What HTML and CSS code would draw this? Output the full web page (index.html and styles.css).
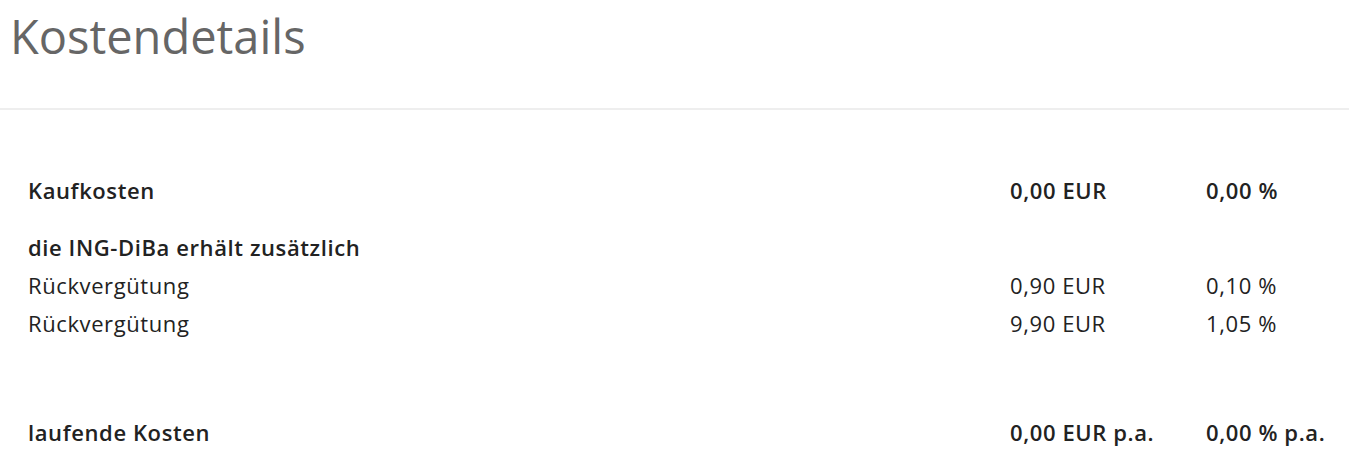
FILE: index.html
```html
<!DOCTYPE html>
<html lang="de">
<head>
  <meta charset="UTF-8">
  <meta name="viewport" content="width=device-width, initial-scale=1.0">
  <title>Kostendetails</title>
  <link rel="stylesheet" href="styles.css">
</head>
<body>
  <header class="kopf">
    <h1>Kostendetails</h1>
  </header>

  <main class="kosten">
    <div class="zeile fett abschnitt">
      <span>Kaufkosten</span>
      <span>0,00 EUR</span>
      <span>0,00 %</span>
    </div>

    <div class="zeile fett untertitel">
      <span>die ING-DiBa erhält zusätzlich</span>
      <span></span>
      <span></span>
    </div>
    <div class="zeile">
      <span>Rückvergütung</span>
      <span>0,90 EUR</span>
      <span>0,10 %</span>
    </div>
    <div class="zeile">
      <span>Rückvergütung</span>
      <span>9,90 EUR</span>
      <span>1,05 %</span>
    </div>

    <div class="zeile fett abschnitt laufend">
      <span>laufende Kosten</span>
      <span>0,00 EUR p.a.</span>
      <span>0,00 % p.a.</span>
    </div>
  </main>
</body>
</html>
```

FILE: styles.css
```css
body { margin: 0; font-family: "Open Sans", "Noto Sans", sans-serif; color: #222; background: #fff; }
.kopf { padding: 6px 10px 0; height: 102px; border-bottom: 2px solid #eeeeee; }
.kopf h1 { margin: 0; font-size: 47px; font-weight: 400; color: #666; line-height: 60px; }
.kosten { padding: 61px 0 0 28px; }
.zeile { display: grid; grid-template-columns: 1fr 196px 143px; font-size: 22px; letter-spacing: 0.6px; line-height: 38px; }
.fett { font-weight: 600; }
.abschnitt { margin-bottom: 19px; }
.laufend { margin-top: 71px; }
```
